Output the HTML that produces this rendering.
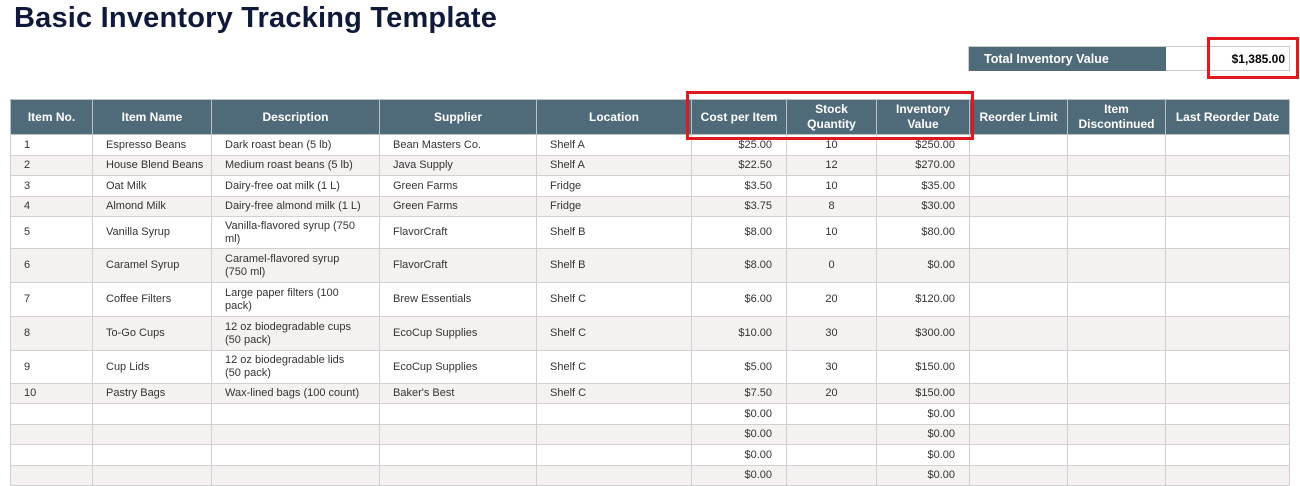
<!DOCTYPE html>
<html><head><style>
body{margin:0;width:1300px;height:486px;background:#fff;position:relative;overflow:hidden;font-family:"Liberation Sans",sans-serif;}
h1{position:absolute;left:14px;top:2px;margin:0;font-size:29px;font-weight:bold;color:#0f1a3a;letter-spacing:0.2px}
.tot{position:absolute;left:968px;top:46px;width:322px;height:25px;border:1px solid #ccc;box-sizing:border-box}
.tot .l{position:absolute;left:0;top:0;width:197px;height:24px;background:#4f6b7a;color:#fff;font-weight:bold;font-size:12.5px;line-height:24px;padding-left:15px;box-sizing:border-box}
.tot .v{position:absolute;right:4px;top:0;line-height:24px;font-weight:bold;font-size:12px;color:#000}
.red{position:absolute;border:3px solid #e0191f;box-sizing:border-box}
table{position:absolute;left:10px;top:99px;border-collapse:collapse;table-layout:fixed}
td,th{border:1px solid #d0d0d0;font-size:11px;color:#333;padding:0 0 0 13px;overflow:hidden;line-height:13px;white-space:nowrap}
th{background:#4f6b7a;color:#fff;font-weight:bold;font-size:12px;padding:0 2px;text-align:center;border-color:#b9c3c9;line-height:15px}
tr:nth-child(odd) td{background:#f5f1f0}
td.r{text-align:right;padding:0 14px 0 0}
td.c{text-align:center;padding:0}
</style></head><body>
<h1>Basic Inventory Tracking Template</h1>
<div class="tot"><div class="l">Total Inventory Value</div><div class="v">$1,385.00</div></div>
<table>
<colgroup><col style="width:82px"><col style="width:119px"><col style="width:168px"><col style="width:157px"><col style="width:155px"><col style="width:95px"><col style="width:90px"><col style="width:93px"><col style="width:98px"><col style="width:98px"><col style="width:124px"></colgroup>
<tr style="height:35px"><th>Item No.</th><th>Item Name</th><th>Description</th><th>Supplier</th><th>Location</th><th>Cost per Item</th><th>Stock<br>Quantity</th><th>Inventory<br>Value</th><th>Reorder Limit</th><th>Item<br>Discontinued</th><th>Last Reorder Date</th></tr>
<tr style="height:21px"><td>1</td><td>Espresso Beans</td><td>Dark roast bean (5 lb)</td><td>Bean Masters Co.</td><td>Shelf A</td><td class="r">$25.00</td><td class="c">10</td><td class="r">$250.00</td><td></td><td></td><td></td></tr>
<tr style="height:20px"><td>2</td><td>House Blend Beans</td><td>Medium roast beans (5 lb)</td><td>Java Supply</td><td>Shelf A</td><td class="r">$22.50</td><td class="c">12</td><td class="r">$270.00</td><td></td><td></td><td></td></tr>
<tr style="height:21px"><td>3</td><td>Oat Milk</td><td>Dairy-free oat milk (1 L)</td><td>Green Farms</td><td>Fridge</td><td class="r">$3.50</td><td class="c">10</td><td class="r">$35.00</td><td></td><td></td><td></td></tr>
<tr style="height:20px"><td>4</td><td>Almond Milk</td><td>Dairy-free almond milk (1 L)</td><td>Green Farms</td><td>Fridge</td><td class="r">$3.75</td><td class="c">8</td><td class="r">$30.00</td><td></td><td></td><td></td></tr>
<tr style="height:32px"><td>5</td><td>Vanilla Syrup</td><td>Vanilla-flavored syrup (750<br>ml)</td><td>FlavorCraft</td><td>Shelf B</td><td class="r">$8.00</td><td class="c">10</td><td class="r">$80.00</td><td></td><td></td><td></td></tr>
<tr style="height:34px"><td>6</td><td>Caramel Syrup</td><td>Caramel-flavored syrup<br>(750 ml)</td><td>FlavorCraft</td><td>Shelf B</td><td class="r">$8.00</td><td class="c">0</td><td class="r">$0.00</td><td></td><td></td><td></td></tr>
<tr style="height:34px"><td>7</td><td>Coffee Filters</td><td>Large paper filters (100<br>pack)</td><td>Brew Essentials</td><td>Shelf C</td><td class="r">$6.00</td><td class="c">20</td><td class="r">$120.00</td><td></td><td></td><td></td></tr>
<tr style="height:34px"><td>8</td><td>To-Go Cups</td><td>12 oz biodegradable cups<br>(50 pack)</td><td>EcoCup Supplies</td><td>Shelf C</td><td class="r">$10.00</td><td class="c">30</td><td class="r">$300.00</td><td></td><td></td><td></td></tr>
<tr style="height:33px"><td>9</td><td>Cup Lids</td><td>12 oz biodegradable lids<br>(50 pack)</td><td>EcoCup Supplies</td><td>Shelf C</td><td class="r">$5.00</td><td class="c">30</td><td class="r">$150.00</td><td></td><td></td><td></td></tr>
<tr style="height:20px"><td>10</td><td>Pastry Bags</td><td>Wax-lined bags (100 count)</td><td>Baker's Best</td><td>Shelf C</td><td class="r">$7.50</td><td class="c">20</td><td class="r">$150.00</td><td></td><td></td><td></td></tr>
<tr style="height:21px"><td></td><td></td><td></td><td></td><td></td><td class="r">$0.00</td><td></td><td class="r">$0.00</td><td></td><td></td><td></td></tr>
<tr style="height:20px"><td></td><td></td><td></td><td></td><td></td><td class="r">$0.00</td><td></td><td class="r">$0.00</td><td></td><td></td><td></td></tr>
<tr style="height:21px"><td></td><td></td><td></td><td></td><td></td><td class="r">$0.00</td><td></td><td class="r">$0.00</td><td></td><td></td><td></td></tr>
<tr style="height:20px"><td></td><td></td><td></td><td></td><td></td><td class="r">$0.00</td><td></td><td class="r">$0.00</td><td></td><td></td><td></td></tr>
</table>
<div class="red" style="left:1207px;top:37px;width:92px;height:42px"></div>
<div class="red" style="left:686px;top:91px;width:288px;height:49px"></div>
</body></html>
